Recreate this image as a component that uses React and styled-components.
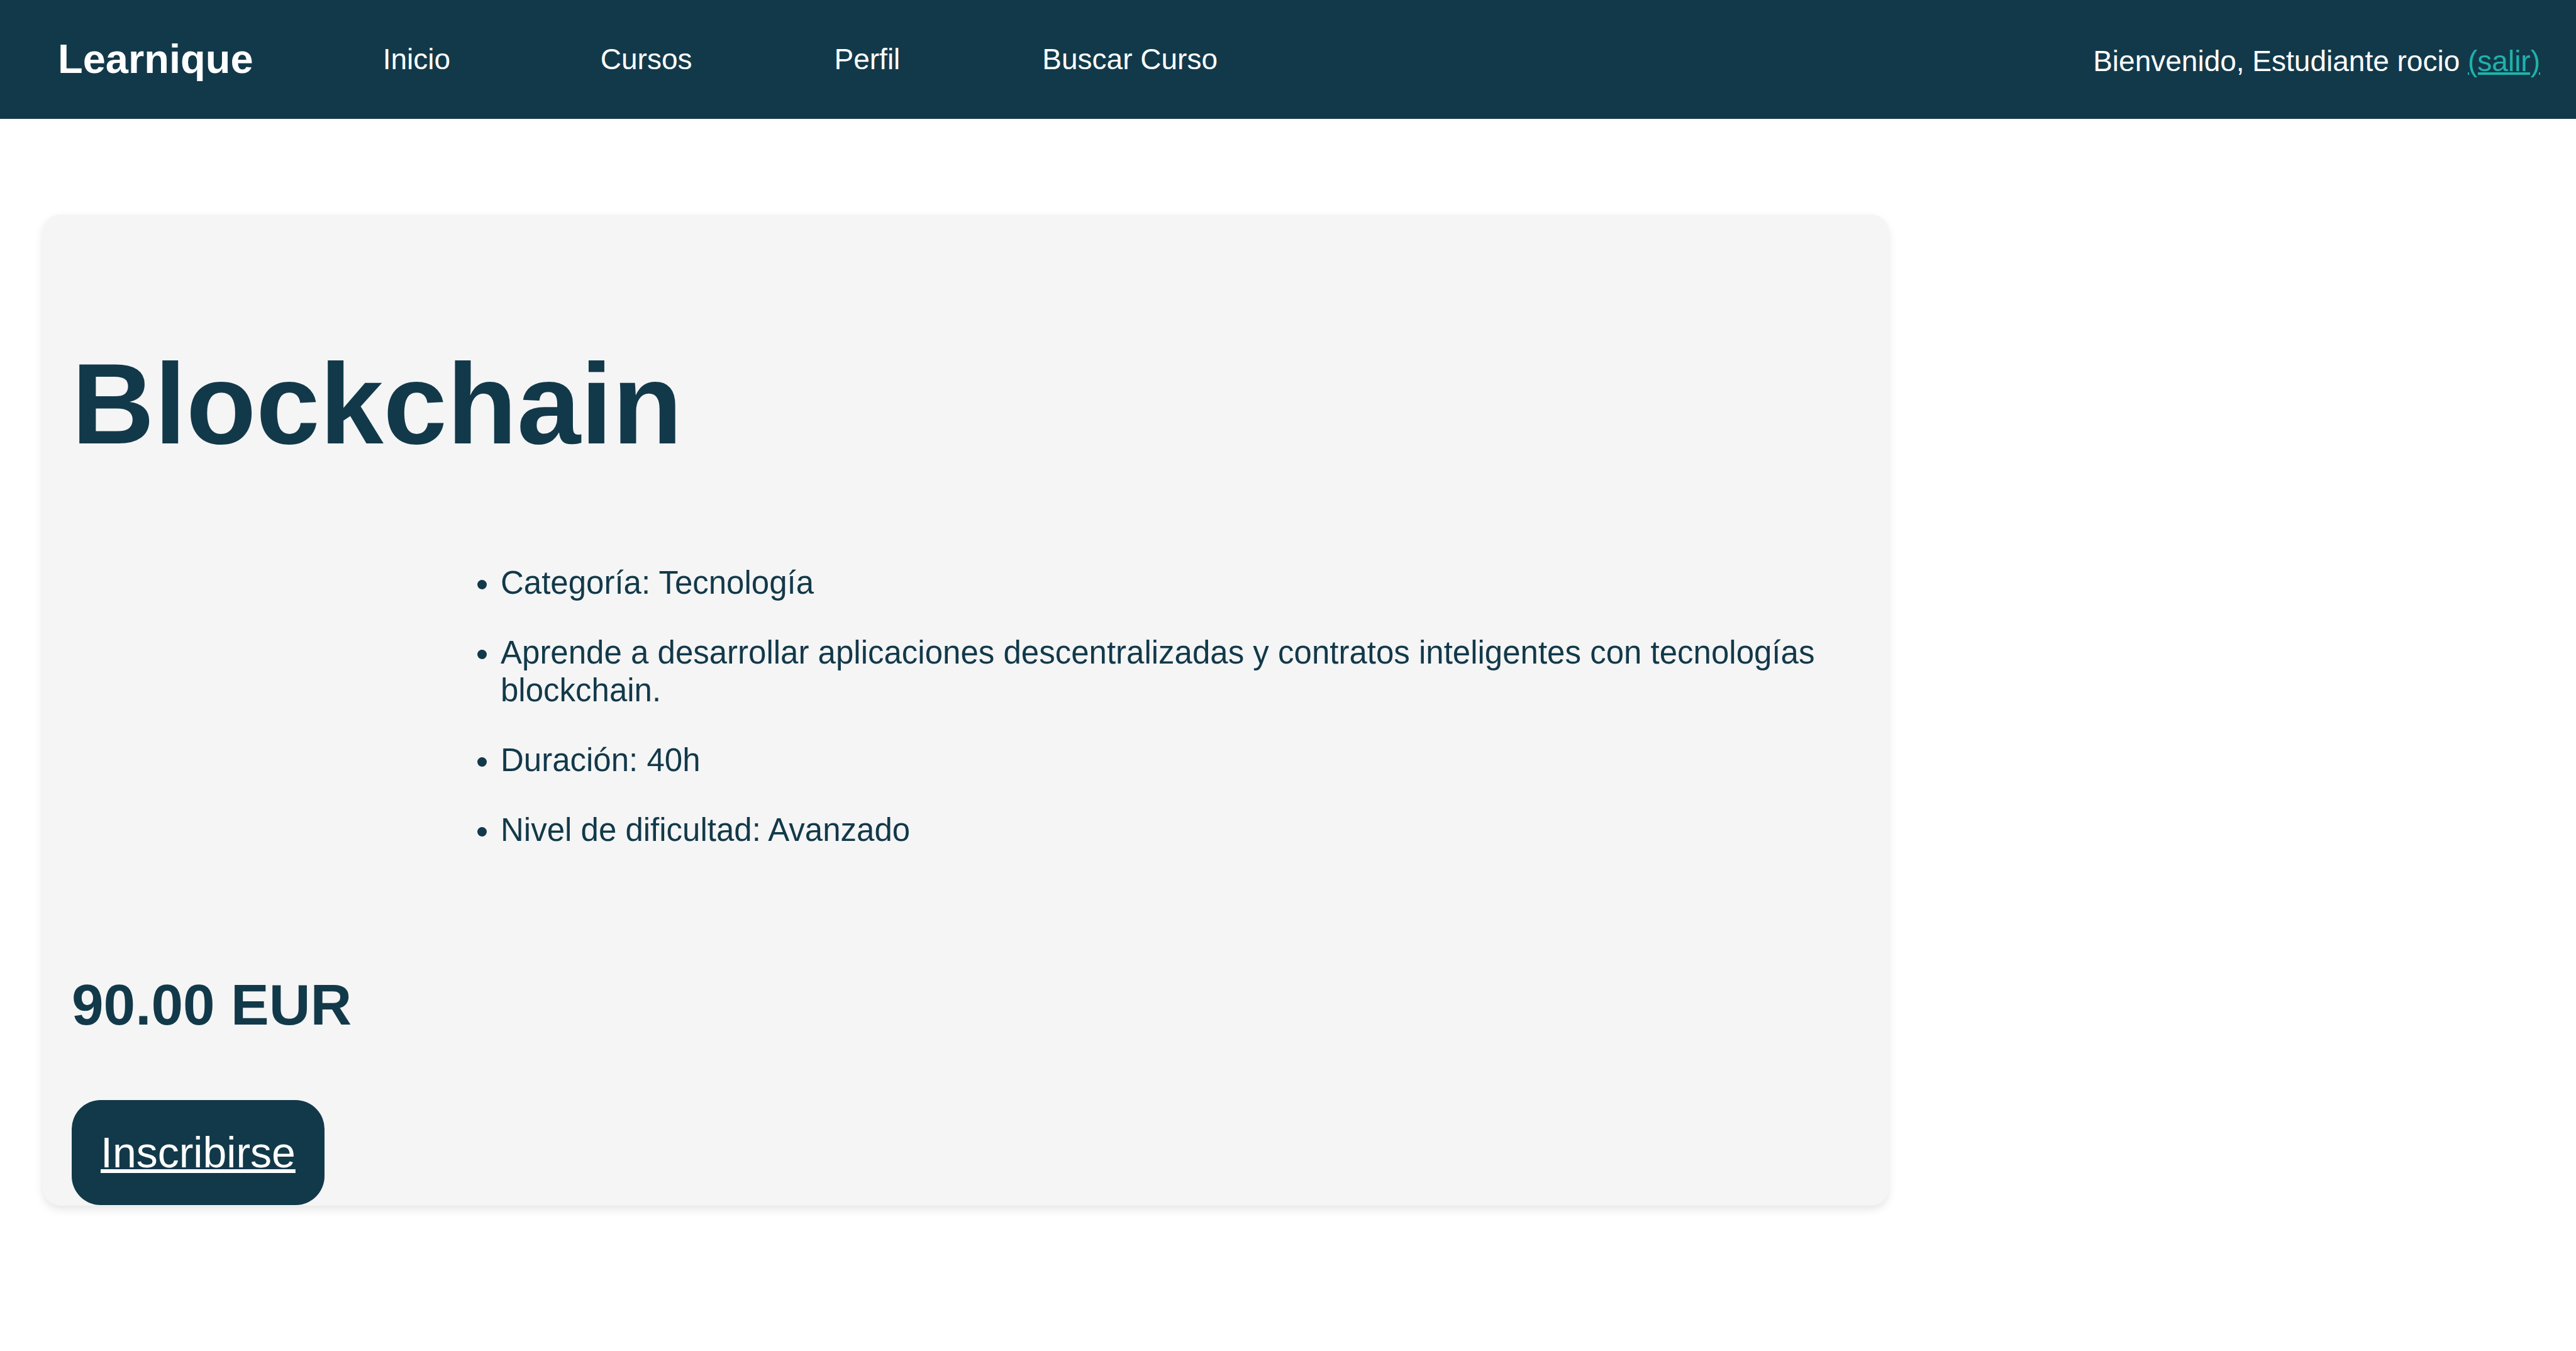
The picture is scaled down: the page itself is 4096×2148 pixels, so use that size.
import React from "react";
import styled, { createGlobalStyle } from "styled-components";

const navy = "#12394a";

const GlobalStyle = createGlobalStyle`
  *, *::before, *::after {
    box-sizing: border-box;
  }
  body {
    margin: 0;
    background: #ffffff;
    color: ${navy};
    font-family: "Liberation Sans", Arial, Helvetica, sans-serif;
  }
`;

const Header = styled.header`
  display: flex;
  align-items: center;
  min-height: 189px;
  padding: 0 57px 2px 92px;
  background: ${navy};
  color: #ffffff;
  font-size: 46px;
  line-height: 52px;
`;

const Logo = styled.a`
  color: inherit;
  font-size: 65px;
  font-weight: 700;
  line-height: 76px;
  text-decoration: none;
`;

const Nav = styled.nav`
  display: flex;
  gap: 226px;
  margin-left: 206px;
`;

const NavLink = styled.a`
  color: inherit;
  text-decoration: none;
  white-space: pre;
`;

const Welcome = styled.p`
  margin: 0 0 0 auto;
  padding-top: 6px;
`;

const LogoutLink = styled.a`
  color: #20b2aa;
  text-decoration-thickness: 4px;
`;

const Main = styled.main`
  padding: 152px 0 152px 68px;
`;

const Card = styled.article`
  display: flex;
  flex-direction: column;
  align-items: flex-start;
  box-sizing: content-box;
  width: 70vw;
  padding: 196px 22px 1px 46px;
  border-radius: 28px;
  background: #f5f5f5;
  box-shadow: 0 6px 14px rgba(0, 0, 0, 0.1);
`;

const Title = styled.h1`
  margin: 0 0 150px;
  font-size: 182px;
  line-height: 210px;
`;

const Details = styled.ul`
  display: flex;
  flex-direction: column;
  gap: 51px;
  margin: 0 0 195px 682px;
  padding: 0;
  font-size: 51px;
  line-height: 60px;
`;

const Price = styled.h2`
  margin: 0 0 99px;
  font-size: 91px;
  line-height: 105px;
`;

const EnrollLink = styled.a`
  padding: 45px 46px;
  border-radius: 46px;
  background: ${navy};
  color: #ffffff;
  font-size: 68px;
  line-height: 77px;
  text-decoration-thickness: 6px;
`;

const links = ["Inicio ", "Cursos", "Perfil", "Buscar Curso"];

const details = [
  "Categoría: Tecnología",
  "Aprende a desarrollar aplicaciones descentralizadas y contratos inteligentes con tecnologías blockchain.",
  "Duración: 40h",
  "Nivel de dificultad: Avanzado",
];

export default function App() {
  return (
    <>
      <GlobalStyle />
      <Header>
        <Logo href="#">Learnique</Logo>
        <Nav>
          {links.map((label) => (
            <NavLink key={label} href="#">
              {label}
            </NavLink>
          ))}
        </Nav>
        <Welcome>
          Bienvenido, Estudiante rocio <LogoutLink href="#">(salir)</LogoutLink>
        </Welcome>
      </Header>
      <Main>
        <Card>
          <Title>Blockchain</Title>
          <Details>
            {details.map((text) => (
              <li key={text}>{text}</li>
            ))}
          </Details>
          <Price>90.00 EUR</Price>
          <EnrollLink href="#">Inscribirse</EnrollLink>
        </Card>
      </Main>
    </>
  );
}
